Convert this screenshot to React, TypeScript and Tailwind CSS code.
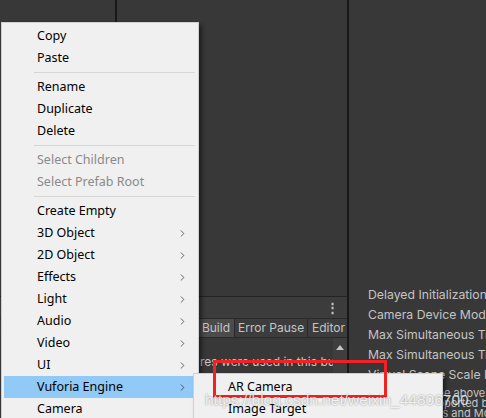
import { ChevronRight } from 'lucide-react';

type Item = { label: string; disabled?: boolean; sub?: boolean; active?: boolean } | 'sep';

const menuItems: Item[] = [
  { label: 'Copy' },
  { label: 'Paste' },
  'sep',
  { label: 'Rename' },
  { label: 'Duplicate' },
  { label: 'Delete' },
  'sep',
  { label: 'Select Children', disabled: true },
  { label: 'Select Prefab Root', disabled: true },
  'sep',
  { label: 'Create Empty' },
  { label: '3D Object', sub: true },
  { label: '2D Object', sub: true },
  { label: 'Effects', sub: true },
  { label: 'Light', sub: true },
  { label: 'Audio', sub: true },
  { label: 'Video', sub: true },
  { label: 'UI', sub: true },
  { label: 'Vuforia Engine', sub: true, active: true },
  { label: 'Camera' },
];

const inspectorRows = [
  'Delayed Initialization',
  'Camera Device Mode',
  'Max Simultaneous Tracked Images',
  'Max Simultaneous Tracked Objects',
  'Virtual Scene Scale Factor',
];

function MenuRow({ item }: { item: Exclude<Item, 'sep'> }) {
  return (
    <div
      className={`relative flex h-[22px] items-center pl-[33px] pr-[8px] ${
        item.active ? 'bg-[#91c9f7]' : ''
      } ${item.disabled ? 'text-[#8a8a8a]' : 'text-black'}`}
    >
      <span className="flex-1 whitespace-nowrap">{item.label}</span>
      {item.sub && <ChevronRight size={11} strokeWidth={1.6} className="text-[#333]" />}
    </div>
  );
}

export default function App() {
  return (
    <div
      className="relative flex h-[418px] w-[486px] overflow-hidden bg-[#383838]"
      style={{ fontFamily: 'Inter, "Noto Sans", sans-serif' }}
    >
      {/* left side: hierarchy + console */}
      <div className="flex w-[347px] flex-col">
        <div className="flex h-[297px] border-b border-[#232323]">
          <div className="w-[115px]" />
          <div className="w-[2px] bg-[#191919]" />
          <div className="flex-1" />
        </div>
        <div className="flex h-[21px] items-center justify-end bg-[#3c3c3c] pr-[8px] text-[#c4c4c4]">
          <span className="text-[13px] font-bold leading-none">⋮</span>
        </div>
        <div className="flex h-[20px] items-stretch justify-end border-y border-[#2a2a2a] bg-[#3c3c3c] pr-[2px] text-[12px] text-[#c4c4c4]">
          <div className="flex items-center border-r border-[#2a2a2a] px-[6px]">Clear</div>
          <div className="flex items-center border-r border-[#2a2a2a] px-[6px]">Collapse</div>
          <div className="flex w-[120px] shrink-0 items-center justify-end border-r border-[#2a2a2a] bg-[#4b4b4b] pr-[4px] whitespace-nowrap">
            Clear on Build
          </div>
          <div className="flex w-[73px] shrink-0 items-center border-r border-[#2a2a2a] pl-[3px] whitespace-nowrap">Error Pause</div>
          <div className="flex w-[37px] shrink-0 items-center pl-[4px]">Editor</div>
        </div>
        <div className="flex flex-1">
          <div className="flex-1 overflow-hidden pt-[15px] pl-[200px] text-[12px] whitespace-nowrap text-[#c4c4c4]">
            res were used in this build
          </div>
          <div className="flex w-[14px] justify-center bg-[#3e3e3e] pt-[7px]">
            <div className="h-0 w-0 border-x-[4px] border-b-[5px] border-x-transparent border-b-[#c4c4c4]" />
          </div>
        </div>
      </div>
      <div className="w-[2px] bg-[#191919]" />

      {/* right side: inspector */}
      <div className="flex flex-1 flex-col overflow-hidden pl-[19px] pt-[285px] text-[12.25px] text-[#c4c4c4]">
        {inspectorRows.map((r) => (
          <div key={r} className="flex h-[20px] items-center whitespace-nowrap">
            {r}
          </div>
        ))}
        <div className="mt-[3px] text-[11px] leading-[10px] whitespace-nowrap">
          <div className="pl-[66px]">the above</div>
          <div className="pl-[57px]">supported by</div>
          <div className="pl-[68px]">es and Models</div>
        </div>
      </div>

      {/* context menu */}
      <div
        className="absolute left-[1px] top-[22px] w-[198px] border border-[#cfcfcf] bg-[#f0f0f0] pt-[2px] pb-[2px] text-[12.5px] shadow-[3px_3px_4px_rgba(0,0,0,0.45)]"
        style={{ fontFamily: '"Noto Sans", sans-serif' }}
      >
        <div className="mx-[2px]">
          {menuItems.map((item, i) =>
            item === 'sep' ? (
              <div key={i} className="py-[3px] pl-[30px] pr-[1px]">
                <div className="h-[1px] bg-[#d7d7d7]" />
              </div>
            ) : (
              <MenuRow key={i} item={item} />
            ),
          )}
        </div>
      </div>

      {/* submenu */}
      <div
        className="absolute left-[193px] top-[373px] w-[250px] border border-[#cfcfcf] bg-[#f0f0f0] pt-[2px] text-[12.5px] text-black shadow-[3px_3px_4px_rgba(0,0,0,0.45)]"
        style={{ fontFamily: '"Noto Sans", sans-serif' }}
      >
        <div className="flex h-[22px] items-center pl-[34px]">AR Camera</div>
        <div className="flex h-[22px] items-center pl-[34px]">Image Target</div>
      </div>

      {/* annotation box */}
      <div className="absolute left-[213px] top-[360px] h-[38px] w-[174px] border-[3px] border-[#f22222]" />

      {/* watermark */}
      <div
        className="absolute left-[205px] top-[388px] text-[15.5px] whitespace-nowrap text-white/80"
        style={{ fontFamily: '"Liberation Sans", sans-serif', textShadow: '0 0 2px rgba(0,0,0,0.45)' }}
      >
        https://blog.csdn.net/weixin_44806700
      </div>
    </div>
  );
}
